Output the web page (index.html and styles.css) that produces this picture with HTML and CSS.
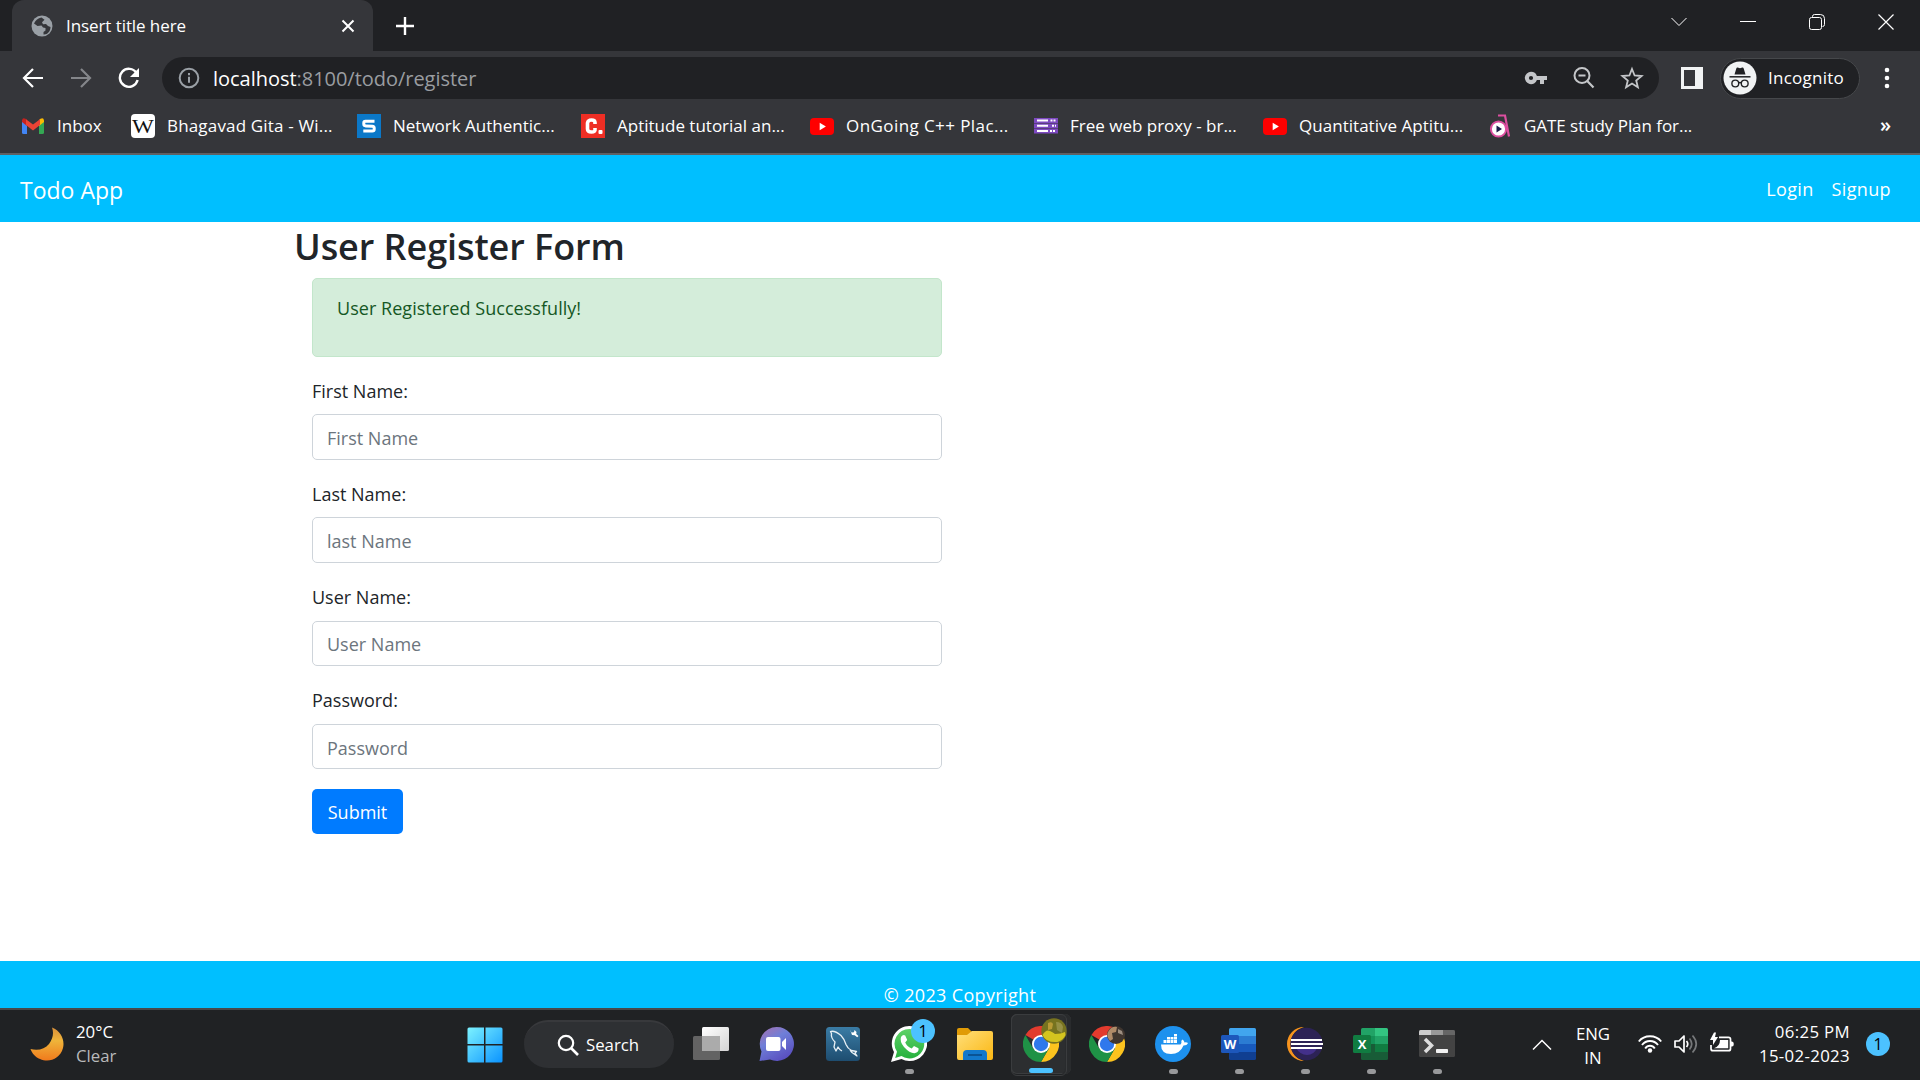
FILE: index.html
```html
<!DOCTYPE html>
<html lang="en">
<head>
<meta charset="utf-8">
<title>Insert title here</title>
<link rel="stylesheet" href="styles.css">
</head>
<body>
<svg class="defs" width="0" height="0" aria-hidden="true">
  <defs>
    <linearGradient id="moonFill" x1="0" y1="0" x2="0" y2="1"><stop offset="0" stop-color="#d9903a"/><stop offset=".4" stop-color="#efb43a"/><stop offset="1" stop-color="#f07a1c"/></linearGradient>
    <linearGradient id="winFill" x1="0" y1="0" x2="1" y2="1"><stop offset="0" stop-color="#7df3ff"/><stop offset="1" stop-color="#0a93ff"/></linearGradient>
    <linearGradient id="chatFill" x1="0" y1="0" x2=".6" y2="1"><stop offset="0" stop-color="#a070b8"/><stop offset=".25" stop-color="#8a78c4"/><stop offset=".45" stop-color="#6f7fd8"/><stop offset="1" stop-color="#5a50c0"/></linearGradient>
    <linearGradient id="sqlFill" x1="0" y1="0" x2="0" y2="1"><stop offset="0" stop-color="#3a7ca5"/><stop offset="1" stop-color="#1e4d70"/></linearGradient>
    <linearGradient id="folderFill" x1="0" y1="0" x2="1" y2="1"><stop offset="0" stop-color="#ffdf7a"/><stop offset="1" stop-color="#fbb713"/></linearGradient>
    <linearGradient id="greenFill" x1="0" y1="0" x2="0" y2="1"><stop offset="0" stop-color="#5fd267"/><stop offset="1" stop-color="#27b13e"/></linearGradient>
    <linearGradient id="viewFill" x1="0" y1="0" x2="1" y2="1"><stop offset="0" stop-color="#fff"/><stop offset="1" stop-color="#d4d4d4"/></linearGradient>
    <symbol id="chrome" viewBox="0 0 36 36">
      <path d="M18 18 2.4 9A18 18 0 0 1 33.6 9Z" fill="#e33b2e"/>
      <path d="M18 9H33.6A18 18 0 0 1 18 36L25.8 22.5Z" fill="#fcc31e"/>
      <path d="M10.2 22.5 2.4 9A18 18 0 0 0 18 36L25.8 22.5Z" fill="#1f9246"/>
      <circle cx="18" cy="18" r="9" fill="#fff"/><circle cx="18" cy="18" r="7.2" fill="#2f78ec"/>
    </symbol>
    <symbol id="youtube" viewBox="0 0 24 24"><rect y="4" width="24" height="17" rx="4" fill="#f00"/><path d="M9.7 8.8v7.4l6.2-3.7z" fill="#fff"/></symbol>
  </defs>
</svg>

<header class="browser">
  <div class="tabstrip">
    <div class="tab">
      <svg class="globe" viewBox="0 0 22 22" width="22" height="22"><circle cx="11" cy="11" r="10.5" fill="#9aa0a6"/><path d="M10.5 2.5c-3.500.5-6 2.500-7.500 6l3.500 2.500 4-.5 1.500 2 2.500.5v2.500l-2 1.500v2.500c4 .3 7-3 7-7.500l-2.500-1-2-2-3 .2-1-2 2.500-2.500z" fill="#35363a"/></svg>
      <span class="tab-title">Insert title here</span>
      <svg class="tab-close" viewBox="0 0 14 14" width="14" height="14"><path d="M1.500 1.500l11 11M12.500 1.500l-11 11" stroke="#fff" stroke-width="2"/></svg>
    </div>
    <svg class="new-tab" viewBox="0 0 18 18" width="18" height="18"><path d="M9 0v18M0 9h18" stroke="#fff" stroke-width="2.4"/></svg>
    <div class="window-controls">
      <svg viewBox="0 0 16 16" width="16" height="16"><path d="M.5 4 8 11.500 15.500 4" fill="none" stroke="#fff"/></svg>
      <svg viewBox="0 0 16 16" width="16" height="16"><path d="M0 7.500h16" stroke="#fff"/></svg>
      <svg viewBox="0 0 16 16" width="16" height="16"><rect x=".5" y="3.500" width="12" height="12" rx="2" fill="none" stroke="#fff"/><path d="M3.500 3V2.500q0-2 2-2h6q4 0 4 4v6q0 2-2 2" fill="none" stroke="#fff"/></svg>
      <svg viewBox="0 0 16 16" width="16" height="16"><path d="M.5.5l15 15M15.500.5l-15 15" stroke="#fff" stroke-width="1.200"/></svg>
    </div>
  </div>

  <div class="toolbar">
    <div class="nav-buttons">
      <svg viewBox="0 0 22 22" width="22" height="22"><path d="M21 11H2.500M11 2 2 11l9 9" fill="none" stroke="#fff" stroke-width="2.200"/></svg>
      <svg viewBox="0 0 22 22" width="22" height="22"><path d="M1 11h18.500M11 2l9 9-9 9" fill="none" stroke="#84868a" stroke-width="2.200"/></svg>
      <svg viewBox="0 0 22 22" width="22" height="22"><path d="M18.500 6A9 9 0 1 0 19.600 13" fill="none" stroke="#fff" stroke-width="2.400"/><path d="M21 1v9h-9z" fill="#fff"/></svg>
    </div>
    <div class="omnibox">
      <svg viewBox="0 0 22 22" width="22" height="22"><circle cx="11" cy="11" r="9.300" fill="none" stroke="#9aa0a6" stroke-width="2"/><path d="M11 9.800v6M11 6v2.200" stroke="#9aa0a6" stroke-width="2"/></svg>
      <span class="url"><b>localhost</b>:8100/todo/register</span>
      <div class="omni-actions">
        <svg viewBox="0 0 24 24" width="24" height="24"><path fill="#c4c6c9" fill-rule="evenodd" d="M7 5.800a6.200 6.200 0 1 0 5.900 8.200H16v4h4v-4h3v-4H12.900A6.200 6.200 0 0 0 7 5.800zm0 4.100a2.100 2.100 0 1 1 0 4.200 2.100 2.100 0 0 1 0-4.200z"/></svg>
        <svg viewBox="0 0 24 24" width="24" height="24"><circle cx="10" cy="9.500" r="7.500" fill="none" stroke="#c4c6c9" stroke-width="2"/><path d="M6.500 9.500h7M15 14.800l6.500 6.700" stroke="#c4c6c9" stroke-width="2.200"/></svg>
        <svg viewBox="0 0 24 24" width="24" height="24"><path d="M12 3l2.600 6.500 7 .5-5.400 4.500 1.700 6.800L12 17.600l-5.900 3.700 1.700-6.800L2.400 10l7-.5z" fill="none" stroke="#c4c6c9" stroke-width="1.800"/></svg>
      </div>
    </div>
    <svg class="side-panel" viewBox="0 0 22 22" width="22" height="22"><path d="M0 0h22v22H0zM3 3v16h11V3z" fill="#f1f3f4" fill-rule="evenodd"/></svg>
    <div class="incognito">
      <svg viewBox="0 0 34 34" width="34" height="34"><circle cx="17" cy="17" r="16.500" fill="#f1f3f4"/><path d="M11.500 13.500l1.800-6q.4-1.200 1.400-.9l2.300.7 2.300-.7q1-.3 1.400.9l1.800 6z" fill="#202124"/><path d="M6.500 15.800h21" stroke="#202124" stroke-width="1.500"/><g fill="none" stroke="#202124" stroke-width="1.400"><circle cx="12.300" cy="22.500" r="3.400"/><circle cx="21.700" cy="22.500" r="3.400"/><path d="M15.700 22q1.300-1 2.600 0"/></g></svg>
      <span>Incognito</span>
    </div>
    <svg class="kebab" viewBox="0 0 6 22" width="6" height="22"><g fill="#fff"><circle cx="3" cy="3" r="2.300"/><circle cx="3" cy="11" r="2.300"/><circle cx="3" cy="19" r="2.300"/></g></svg>
  </div>

  <div class="bookmarks">
    <a class="bm bm-inbox"><svg viewBox="0 0 24 24" width="24" height="24"><path d="M1 6v12.500q0 1.500 1.500 1.500H6v-9z" fill="#4285f4"/><path d="M23 6v12.500q0 1.500-1.500 1.500H18v-9z" fill="#34a853"/><path d="M18 6v6l5-4V6.500Q22.500 3 19.500 4.800z" fill="#fbbc04"/><path d="M6 6v6L1 8V6.500Q1.500 3 4.500 4.800z" fill="#c5221f"/><path d="M5 5.200 12 10.500 19 5.200V11L12 16.500 5 11z" fill="#ea4335"/></svg><span>Inbox</span></a>
    <a class="bm bm-wiki"><svg viewBox="0 0 24 24" width="24" height="24"><rect width="24" height="24" rx="4" fill="#fff"/><text x="1" y="19" class="wiki-mark" textLength="22" lengthAdjust="spacingAndGlyphs">W</text></svg><span>Bhagavad Gita - Wi...</span></a>
    <a class="bm bm-short"><svg viewBox="0 0 24 24" width="24" height="24"><rect width="24" height="24" fill="#0b78c8"/><path d="M17.500 7.200H8.500Q6.800 7.200 6.800 9v1q0 1.800 2 1.900l6.500.3q1.900.1 1.900 1.900v1.200q0 1.800-1.900 1.800H6.300" fill="none" stroke="#fff" stroke-width="3"/></svg><span>Network Authentic...</span></a>
    <a class="bm bm-long"><svg viewBox="0 0 24 24" width="24" height="24"><rect width="24" height="24" fill="#ee2e24"/><path d="M14 10V8.500Q14 6 10.500 6T6.500 9v6q0 3 4 3t3.500-2.500V14" fill="none" stroke="#fff" stroke-width="3.600"/><rect x="17.500" y="16" width="4" height="4" rx="1" fill="#fff"/></svg><span>Aptitude tutorial an...</span></a>
    <a class="bm bm-short bm-wide"><svg width="24" height="24"><use href="#youtube"/></svg><span>OnGoing C++ Plac...</span></a>
    <a class="bm bm-long"><svg viewBox="0 0 24 24" width="24" height="24"><g fill="#7d49c0"><rect y="4" width="24" height="5"/><rect y="9.500" width="24" height="4.500"/><rect y="14.500" width="24" height="5"/></g><path d="M3 6.500h11M3 11.800h11M3 17h11" stroke="#fff" stroke-width="2"/><path d="M16.500 6.500h5M18 11.800h4M16 17h5" stroke="#fff" stroke-width="2" stroke-dasharray="2 1"/></svg><span>Free web proxy - br...</span></a>
    <a class="bm bm-video"><svg width="24" height="24"><use href="#youtube"/></svg><span>Quantitative Aptitu...</span></a>
    <a class="bm bm-gate"><svg viewBox="0 0 24 24" width="24" height="24"><path d="M9 1.500h7l4 21" fill="none" stroke="#dd4fa0" stroke-width="2.200"/><circle cx="9.500" cy="15" r="7.600" fill="#fff" stroke="#dd4fa0" stroke-width="2"/><path d="M7.500 11.500v7l5.500-3.500z" fill="#1b1b4b"/></svg><span>GATE study Plan for...</span></a>
    <span class="more">»</span>
  </div>
</header>

<main class="page">
  <nav class="navbar">
    <a class="brand">Todo App</a>
    <div class="links"><a>Login</a><a>Signup</a></div>
  </nav>
  <section class="container">
    <h2>User Register Form</h2>
    <div class="column">
      <div class="alert">User Registered Successfully!</div>
      <form>
        <label for="first">First Name:</label>
        <input id="first" type="text" placeholder="First Name">
        <label for="last">Last Name:</label>
        <input id="last" type="text" placeholder="last Name">
        <label for="user">User Name:</label>
        <input id="user" type="text" placeholder="User Name">
        <label for="pass">Password:</label>
        <input id="pass" type="password" placeholder="Password">
        <button type="button">Submit</button>
      </form>
    </div>
  </section>
  <footer class="footer">© 2023 Copyright</footer>
</main>

<div class="taskbar">
  <div class="weather">
    <svg viewBox="0 0 34 34" width="34" height="34"><path d="M22 .5C31 4 35 13 33 21 30 32 19 36 10 32 5 30 2 26 .5 22 8 24 15 22 19 17 23 12 24 6 22 .5z" fill="url(#moonFill)"/></svg>
    <div><span>20°C</span><span class="dim">Clear</span></div>
  </div>
  <div class="apps">
    <svg class="start" viewBox="0 0 36 36" width="36" height="36"><path d="M2 .5H17V17H.5V2Q.5.500 2 .5zM18.500.5H34q1.500 0 1.500 1.500V17h-17zM.5 18.500H17v17H2q-1.500 0-1.500-1.500zM18.500 18.500h17V34q0 1.500-1.500 1.500H18.500z" fill="url(#winFill)"/></svg>
    <div class="search"><svg viewBox="0 0 22 22" width="22" height="22"><circle cx="9" cy="9" r="7.200" fill="none" stroke="#fff" stroke-width="2.200"/><path d="M14 14l7 7" stroke="#fff" stroke-width="2.600"/></svg><span>Search</span></div>
    <div class="app"><svg viewBox="0 0 36 36" width="36" height="36"><rect x="0" y="10" width="27" height="24" rx="1.500" fill="#636363"/><rect x="9" y="1" width="27" height="24" rx="1.500" fill="url(#viewFill)"/><path d="M9 10h18v15H9z" fill="#ababab"/></svg></div>
    <div class="app"><svg viewBox="0 0 36 36" width="36" height="36"><path d="M17.500 1a17 17 0 1 1-6.500 32.500L.5 35 2.500 25.500A17 17 0 0 1 17.500 1z" fill="url(#chatFill)"/><rect x="7" y="11" width="14.500" height="14" rx="2" fill="#fff"/><path d="M23 16l4-4v12l-4-4z" fill="#fff"/></svg></div>
    <div class="app"><svg viewBox="0 0 36 36" width="36" height="36"><rect x="1" y="1" width="34" height="34" rx="3.500" fill="url(#sqlFill)"/><path d="M17 25c-2-1-3-2-4-4l-2 4-2-4 1-5C7 13 6 10 6.500 7.500L5.500 5.500C9 4.500 13 7 16 9.500c3 3 4 6 5 9 1 2.500 2.500 4.500 5.500 6l5 1-1.500 1.500 2 3-5-3.500-2-2.500" fill="none" stroke="#e8f0f5" stroke-width="1.300" stroke-linejoin="round"/><path d="M25 3.500l1.500 3 2.500-.3.500-2.200 2 2-.3 2 2.300 2-1.300 1.300-2.500-2-2.700-.2z" fill="#fff"/></svg></div>
    <div class="app running"><svg viewBox="0 0 36 36" width="36" height="36"><path d="M18.500 0a17.500 17.500 0 1 1-8 33L0 36 3 26A17.500 17.500 0 0 1 18.500 0z" fill="#fff"/><path d="M18.500 3a14.700 14.700 0 1 1-8 27L4.200 32 6 25.700A14.700 14.700 0 0 1 18.500 3z" fill="url(#greenFill)"/><path d="M10 11q2-3 4.200-1.500l2 4.500-2 2.500q2.200 4.500 6.500 6l2.300-2.500 4.500 2.200q.8 4-4 5Q19 27.500 13 21 8.500 15.500 10 11z" fill="#fff"/></svg><span class="badge">1</span></div>
    <div class="app"><svg viewBox="0 0 36 36" width="36" height="36"><path d="M0 4q0-2 2-2h9l3.500 3.500V12H0z" fill="#e09b06"/><path d="M0 9h10l5-4h19q2 0 2 2v25q0 2-2 2H2q-2 0-2-2z" fill="url(#folderFill)"/><path d="M6 34V28q0-4 4-4h16q4 0 4 4v6z" fill="#1278cb"/><path d="M11 29h14" stroke="#0a4b86" stroke-width="1.600"/></svg></div>
    <div class="app active"><svg width="36" height="36"><use href="#chrome"/></svg>
      <svg class="avatar olive" viewBox="0 0 26 26" width="26" height="26"><circle cx="13" cy="13" r="12.700" fill="#77731f"/><path d="M1.500 17Q5 11 9 13t5 3q6 0 10-2l.5 3q-2 5-8 7Q5 25 1.500 17z" fill="#d4c41f"/><path d="M7 5q4-2 5 1l-1 5-4 1z" fill="#b89a35"/><path d="M15 4q6 0 7 5l-1 6-5-3z" fill="#969045"/></svg></div>
    <div class="app"><svg width="36" height="36"><use href="#chrome"/></svg>
      <svg class="avatar brown" viewBox="0 0 18 18" width="18" height="18"><circle cx="9" cy="9" r="9" fill="#40362f"/><path d="M1 6Q4 0 10 1L9 6l-4 1 1 6-3 2Q-1 10 1 6z" fill="#b08b68"/><path d="M11 3l4 2 1 4-5-2z" fill="#9d8e80"/></svg></div>
    <div class="app running"><svg viewBox="0 0 36 36" width="36" height="36"><circle cx="18" cy="18" r="18" fill="#1d91ee"/><path d="M6 18.500h19.500q1.500-1 .8-3.500l1-1.500q2 1 2.200 3 2-.5 3.500.5-1 2.500-4.500 2.500Q25 28 16 28 6 28 6 18.500z" fill="#fff"/><path d="M8.500 14h3v3h-3zM12 14h3v3h-3zM15.500 14h3v3h-3zM19 14h3v3h-3zM12 11h3v2.500h-3zM15.500 11h3v2.500h-3zM19 11h3v2.500h-3zM19 8h3v2.500h-3z" fill="#fff"/></svg></div>
    <div class="app running"><svg viewBox="0 0 36 36" width="36" height="36"><path d="M8 3.500Q8 2 9.500 2h24Q35 2 35 3.500V10H8z" fill="#41a5ee"/><path d="M8 10h27v8H8z" fill="#2b7cd3"/><path d="M8 18h27v8H8z" fill="#185abd"/><path d="M8 26h27v6.500q0 1.500-1.500 1.500h-24Q8 34 8 32.500z" fill="#103f91"/><rect y="9" width="18" height="18" rx="1.500" fill="#1d57bb"/><text x="9" y="23" text-anchor="middle" class="office">W</text></svg></div>
    <div class="app running"><svg viewBox="0 0 36 36" width="36" height="36"><path d="M17 1A17 17 0 0 0 17 35Q4 31 4 18T17 1z" fill="#f7941e"/><circle cx="19.500" cy="18" r="16.200" fill="#2c2255"/><path d="M9 22q4 7 11 7t10-7z" fill="#43308a"/><path d="M4 14h31M4 18h32M4 22h31" stroke="#fff" stroke-width="2.200"/></svg></div>
    <div class="app running"><svg viewBox="0 0 36 36" width="36" height="36"><path d="M8 3.500Q8 2 9.500 2H22v8H8z" fill="#21a366"/><path d="M22 2h11.500Q35 2 35 3.500V10H22z" fill="#33c481"/><path d="M8 10h14v8H8z" fill="#149257"/><path d="M22 10h13v8H22z" fill="#21a366"/><path d="M8 18h14v8H8z" fill="#185c37"/><path d="M22 18h13v8H22z" fill="#107c41"/><path d="M8 26h27v6.500q0 1.500-1.500 1.500h-24Q8 34 8 32.500z" fill="#185c37"/><rect y="9" width="18" height="18" rx="1.500" fill="#107c41"/><text x="9" y="23" text-anchor="middle" class="office">X</text></svg></div>
    <div class="app running"><svg viewBox="0 0 36 36" width="36" height="36"><rect y="4" width="36" height="27" rx="1.500" fill="#434343"/><path d="M0 9V5.500Q0 4 1.500 4H12v5z" fill="#ccc"/><path d="M12 4h12v5H12z" fill="#999"/><path d="M24 4h10.500Q36 4 36 5.500V9H24z" fill="#666"/><path d="M6 13l6.500 6.500L6 26" fill="none" stroke="#ddd" stroke-width="3.500"/><rect x="17" y="23" width="12" height="4" rx=".8" fill="#f2f2f2"/></svg></div>
  </div>
  <div class="tray">
    <svg class="chev" viewBox="0 0 20 12" width="20" height="12"><path d="M1 10.500 10 1.500l9 9" fill="none" stroke="#fff" stroke-width="1.500"/></svg>
    <div class="lang"><span>ENG</span><span>IN</span></div>
    <div class="status">
      <svg viewBox="0 0 24 24" width="24" height="24"><g fill="none" stroke="#fff" stroke-width="1.900"><path d="M.8 9.500Q5 4.300 12 4.300T23.200 9.500"/><path d="M4 13Q7 9 12 9t8 4"/><path d="M7.200 16.500Q9 13.700 12 13.700t4.800 2.800"/></g><circle cx="12" cy="18.500" r="2.200" fill="#fff"/></svg>
      <svg viewBox="0 0 24 24" width="24" height="24"><path d="M1 9h4l5-5v16l-5-5H1z" fill="none" stroke="#fff" stroke-width="1.700" stroke-linejoin="round"/><path d="M12.500 9q2.500 3 0 6" fill="none" stroke="#fff" stroke-width="1.700"/><path d="M15.500 6.500q4.500 5.500 0 11M18.500 3.500q7.500 8.500 0 17" fill="none" stroke="#76787a" stroke-width="1.700"/></svg>
      <svg viewBox="0 0 24 24" width="24" height="24"><path d="M9 5.300h9.500q2 0 2 2v9.400q0 2-2 2H3q-2 0-2-2V13" fill="none" stroke="#fff" stroke-width="1.700"/><path d="M10 8h8.200v8.200H4q6-2 6-8.200z" fill="#fff"/><path d="M21 9.500h1q1.800 0 1.800 2.500T22 14.500h-1zM4 .5 0 8h3v5l5-8H5l1-4.500z" fill="#fff"/></svg>
    </div>
    <div class="clock"><span>06:25 PM</span><span>15-02-2023</span></div>
    <span class="count">1</span>
  </div>
</div>
</body>
</html>
```
FILE: styles.css
```css
* { box-sizing: border-box; }
body {
  margin: 0; width: 1920px; height: 1080px; overflow: hidden;
  display: grid; grid-template-rows: 155px 853px 72px;
  font-family: "Open Sans", "Noto Sans", sans-serif; background: #fff;
}
.defs { position: absolute; }
svg { display: block; flex: none; }

/* Browser chrome */
.browser {
  display: grid; grid-template-rows: 51px 54px 48px; color: #fff;
  background: #35363a; border-bottom: 2px solid #5f6063; font-size: 17px; letter-spacing: -.08px;
}
.tabstrip { display: flex; align-items: center; background: #202124; }
.tab {
  width: 361px; height: 51px; margin-left: 12px; padding: 0 18px 0 19px; display: flex; align-items: center;
  background: #35363a; border-radius: 12px 12px 0 0;
}
.tab-title { margin-left: 13px; flex: 1; white-space: nowrap; }
.new-tab { margin-left: 23px; }
.window-controls { display: flex; gap: 53px; margin: 0 26px 8px auto; }

.toolbar { display: flex; align-items: center; }
.nav-buttons { display: flex; gap: 26px; margin-left: 22px; width: 140px; }
.omnibox {
  width: 1497px; height: 42px; border-radius: 21px; background: #202124;
  display: flex; align-items: center; padding: 0 15px 0 16px;
}
.url { margin-left: 13px; font-size: 20px; color: #9a9da1; letter-spacing: -.03px; white-space: nowrap; }
.url b { font-weight: 400; color: #fff; }
.omni-actions { display: flex; gap: 24px; margin-left: auto; }
.side-panel { margin-left: 22px; }
.incognito {
  display: flex; align-items: center; gap: 11px; margin-left: 17px; padding-left: 2px;
  width: 140px; height: 41px; border: 1px solid #46484b; border-radius: 21px; background: #202124;
}
.incognito span { margin-top: -2px; letter-spacing: .25px; }
.kebab { margin-left: 24px; }

.bookmarks { display: flex; align-items: center; padding: 0 29px 6px 21px; letter-spacing: 0; }
.bm { display: flex; align-items: center; gap: 12px; white-space: nowrap; }
.bm span { margin-top: -2px; }
.bm-inbox { width: 110px; }
.bm-wiki { width: 226px; letter-spacing: .17px; }
.bm-short { width: 224px; }
.bm-long { width: 229px; }
.bm-wide { letter-spacing: .42px; }
.bm-video { width: 226px; letter-spacing: .03px; }
.bm-gate { width: 229px; gap: 11px; letter-spacing: -.05px; }
.more { margin: -3px 0 0 auto; font-size: 20px; line-height: 20px; font-weight: 600; }

/* Web page */
.page { display: grid; grid-template-rows: 67px 1fr 47px; color: #212529; font-size: 18px; line-height: 28.800px; overflow: hidden; }
.navbar { display: flex; align-items: center; justify-content: space-between; padding: 2px 29px 0 20px; background: #00bfff; color: #fff; }
.brand { font-size: 23px; padding-top: 2px; }
.links { display: flex; gap: 18px; letter-spacing: .35px; }
.container { padding-left: 294px; }
h2 { margin: 0 0 7.600px; padding-top: 2px; font-size: 36px; line-height: 46px; font-weight: 600; letter-spacing: -.07px; }
.column { width: 630px; margin-left: 18px; }
.alert {
  height: 79px; margin-bottom: 20px; padding: 15px 24px; letter-spacing: .04px;
  color: #155724; background: #d4edda; border: 1px solid #c3e6cb; border-radius: 5px;
}
label { display: block; margin-bottom: 8.800px; }
input {
  display: block; width: 100%; height: 45.600px; margin: 0 0 20px; padding: 2px 14px 0;
  border: 1px solid #ced4da; border-radius: 5px; font: inherit; background: #fff;
}
input::placeholder { color: #6c757d; opacity: 1; }
button { display: block; width: 91px; height: 45px; margin-top: -.5px; padding: 2px 0 0; border: 0; border-radius: 5px; background: #007bff; color: #fff; font: inherit; }
.footer { padding-top: 20px; text-align: center; background: #00bfff; color: #fff; letter-spacing: .35px; }

/* Taskbar */
.taskbar {
  display: grid; grid-template-columns: 467px 1fr 400px; color: #fff; background: #202224;
  border-top: 2px solid #47484a; font-size: 16.800px; line-height: 24px;
}
.taskbar span { display: block; }
.weather { display: flex; align-items: center; gap: 12px; padding: 0 0 3px 30px; }
.weather .dim { color: #b9babb; }
.apps { display: flex; align-items: center; padding-bottom: 2px; }
.start { margin-top: 1px; }
.search {
  display: flex; align-items: center; gap: 7px; width: 150px; height: 48px; margin: 0 7px 0 21px; padding-left: 33px;
  border-radius: 24px; background: #2e3033; border-top: 2px solid #38393c;
}
.app { position: relative; width: 60px; height: 60px; margin: 0 6px 0 0; display: grid; place-items: center; }
.running::after, .active::after {
  content: ""; position: absolute; bottom: 0; left: 25.500px; width: 9px; height: 5px; border-radius: 3px; background: #98999b;
}
.active { background: #2c2e30; border-radius: 6px; box-shadow: inset -7px 0 0 -1px #292b2d, inset 0 0 0 1px #3a3c3e; }
.active::before {
  content: ""; position: absolute; left: 0; top: 0; width: 54px; height: 60px;
  border: 1px solid #3a3c3e; border-radius: 6px;
}
.active::after { left: 18px; width: 24px; bottom: 1px; background: #4cc2ff; }
.badge, .count {
  width: 24px; height: 24px; border-radius: 50%; background: #4cc2ff; color: #000; text-align: center;
  font-size: 16px; line-height: 24px;
}
.badge { position: absolute; left: 32px; top: 5px; }
.avatar { position: absolute; }
.olive { left: 30px; top: 4px; }
.brown { left: 30px; top: 12px; }
.office { font: 700 13px "Open Sans", sans-serif; fill: #fff; }
.wiki-mark { font: 400 19px "Liberation Serif", serif; fill: #111; }
.tray { display: flex; align-items: center; padding-left: 12px; }
.lang { width: 60px; margin-left: 11px; padding-top: 1px; text-align: center; }
.status { display: flex; gap: 12px; margin: -2px 0 0 15px; }
.clock { width: 116px; padding-bottom: 2px; text-align: right; letter-spacing: .35px; }
.count { margin: -2px 0 0 16px; }
```
